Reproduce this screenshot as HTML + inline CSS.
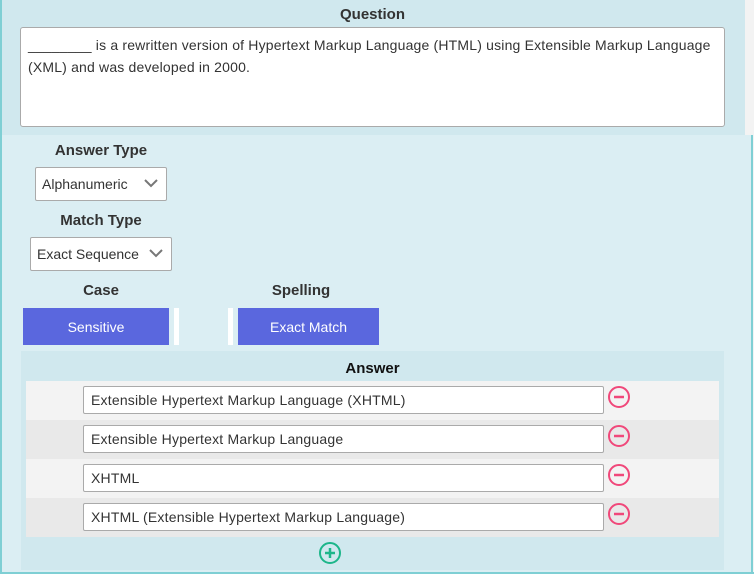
<!DOCTYPE html>
<html><head><style>
body{margin:0;width:754px;height:574px;overflow:hidden;background:#f3f3f3;font-family:"Liberation Sans",sans-serif;font-size:14px;color:#333;position:relative}
.a{position:absolute}
.lbl{position:absolute;font-weight:bold;font-size:15px;text-align:center;color:#333}
.sel{position:absolute;background:#fff;border:1px solid #aaa;border-radius:2px;box-sizing:border-box;font-size:14px;line-height:32px;padding-left:6px}
.sel svg{position:absolute;right:8px;top:11px}
.btn{position:absolute;background:#5a67de;color:#fff;text-align:center;line-height:38px;font-size:14px}
.inp{position:absolute;left:83px;width:521px;height:28px;background:#fff;border:1px solid #aaa;border-radius:2px;box-sizing:border-box;line-height:27px;padding-left:7px;font-size:14px;letter-spacing:0.2px}
.row{position:absolute;left:26px;width:693px;height:39px}
</style></head><body>
<div class="a" style="left:0;top:0;width:745px;height:135px;background:#d0e8ee"></div>
<div class="a" style="left:0;top:135px;width:752px;height:439px;background:#dbeef3"></div>
<div class="a" style="left:0;top:0;width:2px;height:574px;background:#7fcfd4"></div>
<div class="a" style="left:751px;top:135px;width:2px;height:439px;background:#7fcfd4"></div>
<div class="a" style="left:0;top:572px;width:754px;height:2px;background:#7fcfd4"></div>
<div class="lbl" style="left:0;width:745px;top:6px">Question</div>
<div class="a" style="left:20px;top:27px;width:705px;height:100px;background:#fff;border:1px solid #aaa;border-radius:3px;box-sizing:border-box;padding:6px 4px 6px 7px;line-height:22px;font-size:14px;letter-spacing:0.18px;white-space:nowrap">________ is a rewritten version of Hypertext Markup Language (HTML) using Extensible Markup Language<br>(XML) and was developed in 2000.</div>
<div class="lbl" style="left:30px;width:142px;top:142px">Answer Type</div>
<div class="sel" style="left:35px;top:167px;width:132px;height:34px">Alphanumeric<svg width="14" height="9"><path d="M1 1l6 6 6-6" stroke="#777" stroke-width="2" fill="none"/></svg></div>
<div class="lbl" style="left:30px;width:142px;top:212px">Match Type</div>
<div class="sel" style="left:30px;top:237px;width:142px;height:34px">Exact Sequence<svg width="14" height="9"><path d="M1 1l6 6 6-6" stroke="#777" stroke-width="2" fill="none"/></svg></div>
<div class="lbl" style="left:30px;width:142px;top:282px">Case</div>
<div class="lbl" style="left:230px;width:142px;top:282px">Spelling</div>
<div class="btn" style="left:23px;top:308px;width:146px;height:37px">Sensitive</div>
<div class="a" style="left:174px;top:308px;width:5px;height:37px;background:#fff"></div>
<div class="a" style="left:228px;top:308px;width:5px;height:37px;background:#fff"></div>
<div class="btn" style="left:238px;top:308px;width:141px;height:37px">Exact Match</div>
<div class="a" style="left:21px;top:351px;width:703px;height:219px;background:#d0e8ee"></div>
<div class="lbl" style="left:21px;width:703px;top:360px;color:#111">Answer</div>
<div class="row" style="top:381px;background:#f3f3f3"></div>
<div class="row" style="top:420px;background:#e9e9e9"></div>
<div class="row" style="top:459px;background:#f3f3f3"></div>
<div class="row" style="top:498px;background:#e9e9e9"></div>
<div class="inp" style="top:386px">Extensible Hypertext Markup Language (XHTML)</div>
<div class="inp" style="top:425px">Extensible Hypertext Markup Language</div>
<div class="inp" style="top:464px">XHTML</div>
<div class="inp" style="top:503px">XHTML (Extensible Hypertext Markup Language)</div>
<svg class="a" style="left:607px;top:385px" width="24" height="24"><circle cx="12" cy="12" r="10" stroke="#f0487a" stroke-width="2" fill="none"/><path d="M7 12h10" stroke="#f0487a" stroke-width="2.5"/></svg>
<svg class="a" style="left:607px;top:424px" width="24" height="24"><circle cx="12" cy="12" r="10" stroke="#f0487a" stroke-width="2" fill="none"/><path d="M7 12h10" stroke="#f0487a" stroke-width="2.5"/></svg>
<svg class="a" style="left:607px;top:463px" width="24" height="24"><circle cx="12" cy="12" r="10" stroke="#f0487a" stroke-width="2" fill="none"/><path d="M7 12h10" stroke="#f0487a" stroke-width="2.5"/></svg>
<svg class="a" style="left:607px;top:502px" width="24" height="24"><circle cx="12" cy="12" r="10" stroke="#f0487a" stroke-width="2" fill="none"/><path d="M7 12h10" stroke="#f0487a" stroke-width="2.5"/></svg>
<svg class="a" style="left:318px;top:541px" width="24" height="24"><circle cx="12" cy="12" r="10" stroke="#1db68a" stroke-width="2" fill="none"/><path d="M7 12h10M12 7v10" stroke="#1db68a" stroke-width="2.5"/></svg>
</body></html>
